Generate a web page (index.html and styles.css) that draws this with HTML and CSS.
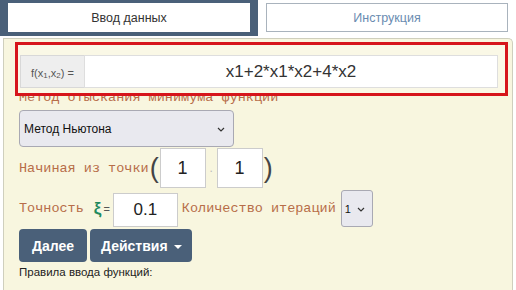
FILE: index.html
```html
<!DOCTYPE html>
<html lang="ru">
<head>
    <meta charset="UTF-8">
    <title>Поиск минимума функции</title>
    <link rel="stylesheet" href="styles.css">
</head>
<body>

    <div class="tabs">
        <div class="tab-active"><span>Ввод данных</span></div>
        <div class="tab">Инструкция</div>
    </div>

    <div class="panel">
        <div class="fbox">
            <div class="input-group">
                <span class="addon">f(x<span class="idx">1</span>,x<span class="idx">2</span>) =</span>
                <input type="text" class="func" value="x1+2*x1*x2+4*x2">
            </div>
        </div>

        <div class="caption">Метод отыскания минимума функции</div>
        <span class="select-wrap method-wrap">
            <select class="method">
                <option>Метод Ньютона</option>
                <option>Метод наискорейшего спуска</option>
            </select>
            <svg class="chevron" width="8" height="5" viewBox="0 0 8 5"><path d="M1 1 L4 4 L7 1" fill="none" stroke="#333" stroke-width="1.2"/></svg>
        </span>

        <div class="row point">
            <span class="caption-inline">Начиная из точки</span>
            <span class="paren">(</span>
            <input type="text" class="num" value="1">
            <span class="dot">.</span>
            <input type="text" class="num" value="1">
            <span class="paren">)</span>
        </div>

        <div class="row prec">
            <span class="caption-inline">Точность</span>
            <span class="xi">ξ</span>
            <span class="eq">=</span>
            <input type="text" class="eps" value="0.1">
            <span class="caption-inline">Количество итераций</span>
            <span class="select-wrap iters-wrap">
                <select class="iters">
                    <option>1</option>
                    <option>2</option>
                    <option>3</option>
                </select>
                <svg class="chevron" width="8" height="5" viewBox="0 0 8 5"><path d="M1 1 L4 4 L7 1" fill="none" stroke="#333" stroke-width="1.2"/></svg>
            </span>
        </div>

        <div class="buttons">
            <button type="button" class="btn">Далее</button>
            <button type="button" class="btn">Действия <span class="caret"></span></button>
        </div>

        <p class="rules">Правила ввода функций:</p>
    </div>

</body>
</html>
```

FILE: styles.css
```css
body {
    margin: 0;
    font-family: "Liberation Sans", Arial, sans-serif;
    background-color: #fff;
    color: #333;
    overflow: hidden;
}
.tabs {
    display: flex;
    gap: 8px;
    height: 36px;
}
.tab-active {
    width: 258px;
    box-sizing: border-box;
    background-color: #4a6079;
    padding: 3px 8px 4px 8px;
}
.tab-active span {
    display: flex;
    align-items: center;
    justify-content: center;
    height: 29px;
    background-color: #fff;
    font-size: 12.5px;
    color: #333;
}
.tab {
    width: 242px;
    height: 29px;
    margin-top: 3px;
    box-sizing: border-box;
    border: 1px solid #a9b3bd;
    display: flex;
    align-items: center;
    justify-content: center;
    font-size: 12.5px;
    color: #6a8cb1;
}
.panel {
    margin: 2px 0 0 3px;
    width: 510px;
    height: 252px;
    box-sizing: border-box;
    border: 1px solid #cfcfbd;
    border-bottom: none;
    border-radius: 0 5px 0 0;
    background-color: #f8f6df;
    padding: 3px 0 0 15px;
}
.fbox {
    position: relative;
    z-index: 1;
    width: 493px;
    height: 54px;
    margin-left: -4px;
    box-sizing: border-box;
    border: 3px solid #d6151b;
    background-color: #faf8e6;
    padding: 10px 7px 0 2px;
}
.input-group {
    display: flex;
    height: 33px;
}
.addon {
    width: 64px;
    box-sizing: border-box;
    padding-top: 2px;
    display: flex;
    align-items: center;
    justify-content: center;
    background-color: #eeeeee;
    border: 1px solid #d8d8d8;
    border-right: none;
    font-size: 11px;
    color: #555;
}
.idx {
    font-size: 8px;
    position: relative;
    top: 3px;
}
.func {
    flex: 1;
    box-sizing: border-box;
    border: 1px solid #dedede;
    background-color: #fff;
    text-align: center;
    font-family: "Liberation Sans", Arial, sans-serif;
    font-size: 17px;
    color: #333;
    outline: none;
}
.caption, .caption-inline {
    font-family: "Liberation Mono", "Courier New", monospace;
    font-size: 13.5px;
    color: #b76d48;
}
.caption {
    line-height: 15px;
    margin-top: -6px;
}
.select-wrap {
    position: relative;
    display: inline-block;
}
.chevron {
    position: absolute;
    top: 50%;
    margin-top: -2px;
    pointer-events: none;
}
.method-wrap {
    display: block;
    width: 215px;
    margin-top: 5px;
}
.method-wrap .chevron {
    right: 9px;
}
.method {
    display: block;
    width: 215px;
    height: 37px;
    appearance: none;
    background-color: #e9e9ef;
    border: 1px solid #a9a9b3;
    border-radius: 4px;
    font-family: "Liberation Sans", Arial, sans-serif;
    font-size: 12px;
    color: #111;
    padding: 0 4px;
}
.row {
    display: flex;
    align-items: center;
}
.point {
    margin-top: 1px;
    height: 40px;
}
.paren {
    font-size: 27px;
    color: #444;
    margin: 0 1px;
}
.num {
    width: 46px;
    height: 40px;
    box-sizing: border-box;
    border: 1px solid #ccc;
    background-color: #fff;
    text-align: center;
    font-family: "Liberation Sans", Arial, sans-serif;
    font-size: 18px;
    color: #222;
}
.dot {
    width: 11px;
    text-align: center;
    color: #bbb;
    font-size: 12px;
}
.prec {
    margin-top: 2px;
    height: 37px;
}
.xi {
    margin-left: 10px;
    color: #1f8a5e;
    font-weight: bold;
    font-size: 17px;
}
.eq {
    margin: 0 3px 0 2px;
    font-size: 11px;
    color: #555;
}
.eps {
    width: 65px;
    height: 34px;
    margin-top: 3px;
    margin-right: 4px;
    box-sizing: border-box;
    border: 1px solid #ccc;
    background-color: #fff;
    text-align: center;
    font-family: "Liberation Sans", Arial, sans-serif;
    font-size: 17px;
    color: #222;
}
.iters-wrap {
    margin-left: 5px;
}
.iters-wrap .chevron {
    right: 8px;
}
.iters {
    display: block;
    width: 32px;
    height: 37px;
    appearance: none;
    background-color: #e9e9ef;
    border: 1px solid #a9a9b3;
    border-radius: 3px;
    font-family: "Liberation Sans", Arial, sans-serif;
    font-size: 11px;
    color: #111;
    padding: 0 3px;
}
.buttons {
    display: flex;
    gap: 3px;
    margin-top: 2px;
}
.btn {
    height: 33px;
    border: none;
    border-radius: 4px;
    background-color: #4a6079;
    color: #fff;
    font-family: "Liberation Sans", Arial, sans-serif;
    font-weight: bold;
    font-size: 14px;
    padding: 0 13px;
    cursor: pointer;
}
.btn + .btn {
    padding: 0 10px 0 11px;
}
.caret {
    display: inline-block;
    width: 0;
    height: 0;
    margin-left: 2px;
    vertical-align: middle;
    border-top: 4px solid #fff;
    border-left: 4px solid transparent;
    border-right: 4px solid transparent;
}
.rules {
    margin: 4px 0 0 0;
    font-size: 11.5px;
    color: #222;
}
```
